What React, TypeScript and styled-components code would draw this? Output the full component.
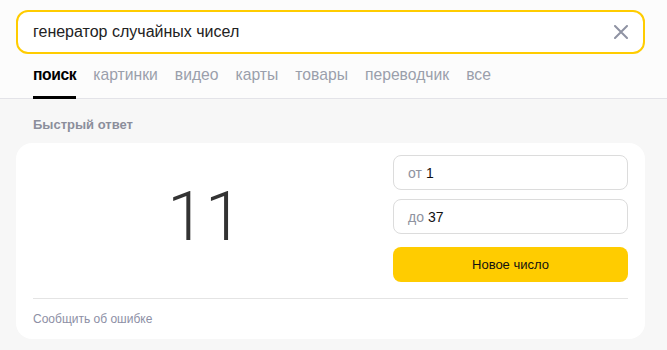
import React, { useState } from "react";
import styled, { createGlobalStyle } from "styled-components";

const GlobalStyle = createGlobalStyle`
  body {
    margin: 0;
    background: #f7f7f7;
    font-family: "Liberation Sans", Arial, sans-serif;
  }
`;

const Header = styled.header`
  background: #fcfcfc;
  border-bottom: 1px solid #e3e3e8;
  padding: 10px 0 0 16px;
`;

const SearchBox = styled.div`
  width: 629px;
  height: 44px;
  box-sizing: border-box;
  border: 2px solid #ffcc00;
  border-radius: 12px;
  background: #fff;
  display: flex;
  align-items: center;
  padding: 0 12px 0 15px;
`;

const Query = styled.input`
  flex: 1;
  border: none;
  outline: none;
  background: transparent;
  font: 16px "Liberation Sans", Arial, sans-serif;
  color: #222;
  padding: 0;
`;

const Clear = styled.button`
  border: none;
  background: none;
  padding: 0;
  width: 20px;
  height: 20px;
  display: flex;
  align-items: center;
  justify-content: center;
  cursor: pointer;
`;

const Tabs = styled.nav`
  display: flex;
  gap: 17px;
  padding-left: 17px;
  margin-top: 9px;
`;

const Tab = styled.a<{ $active?: boolean }>`
  font-size: 15.7px;
  line-height: 20px;
  padding: 2px 0 11px;
  color: ${p => (p.$active ? "#000" : "#9a9fab")};
  font-weight: ${p => (p.$active ? 700 : 400)};
  letter-spacing: ${p => (p.$active ? "-0.4px" : "0")};
  border-bottom: 3px solid ${p => (p.$active ? "#000" : "transparent")};
  margin-bottom: -1px;
  text-decoration: none;
  cursor: pointer;
`;

const Main = styled.main`
  padding: 18px 22px 0 16px;
`;

const Caption = styled.h3`
  margin: 0 0 10px 17px;
  font-size: 13px;
  line-height: 16px;
  font-weight: 700;
  color: #8b8e9b;
`;

const Card = styled.section`
  background: #fff;
  border-radius: 16px;
  padding: 12px 17px 0;
  height: 196px;
  box-sizing: border-box;
`;

const Row = styled.div`
  display: grid;
  grid-template-columns: 1fr 235px;
  gap: 16px;
`;

const Result = styled.div`
  display: flex;
  align-items: center;
  justify-content: center;
  font-family: Roboto, "Liberation Sans", sans-serif;
  font-size: 68px;
  font-weight: 300;
  color: #333;
  padding-bottom: 4px;
`;

const Controls = styled.div`
  display: flex;
  flex-direction: column;
  gap: 9px;
`;

const Field = styled.label`
  height: 35px;
  box-sizing: border-box;
  border: 1px solid #dcdcdc;
  border-radius: 8px;
  display: flex;
  align-items: center;
  padding-left: 14px;
  font-size: 14px;
  gap: 4px;
`;

const FieldLabel = styled.span`
  color: #8f93a0;
`;

const FieldValue = styled.span`
  color: #111;
`;

const Generate = styled.button`
  margin-top: 4px;
  height: 35px;
  border: none;
  border-radius: 8px;
  background: #ffcc00;
  font: 13px "Liberation Sans", Arial, sans-serif;
  color: #111;
  cursor: pointer;
`;

const Divider = styled.hr`
  border: none;
  border-top: 1px solid #e4e4e4;
  margin: 16px 0 0;
`;

const Report = styled.a`
  display: block;
  padding-top: 13px;
  font-size: 12px;
  color: #8d8fa5;
  text-decoration: none;
`;

const tabs = ["поиск", "картинки", "видео", "карты", "товары", "переводчик", "все"];

export default function App() {
  const [value, setValue] = useState(11);
  const [query, setQuery] = useState("генератор случайных чисел");
  const min = 1;
  const max = 37;

  return (
    <>
      <GlobalStyle />
      <Header>
        <SearchBox>
          <Query value={query} onChange={e => setQuery(e.target.value)} />
          <Clear onClick={() => setQuery("")} aria-label="Очистить">
            <svg width="14" height="14" viewBox="0 0 14 14">
              <path d="M1 1L13 13M13 1L1 13" stroke="#8f93a3" strokeWidth="2" strokeLinecap="round" />
            </svg>
          </Clear>
        </SearchBox>
        <Tabs>
          {tabs.map((t, i) => (
            <Tab key={t} $active={i === 0}>
              {t}
            </Tab>
          ))}
        </Tabs>
      </Header>
      <Main>
        <Caption>Быстрый ответ</Caption>
        <Card>
          <Row>
            <Result>{value}</Result>
            <Controls>
              <Field>
                <FieldLabel>от</FieldLabel>
                <FieldValue>{min}</FieldValue>
              </Field>
              <Field>
                <FieldLabel>до</FieldLabel>
                <FieldValue>{max}</FieldValue>
              </Field>
              <Generate onClick={() => setValue(min + Math.floor(Math.random() * (max - min + 1)))}>
                Новое число
              </Generate>
            </Controls>
          </Row>
          <Divider />
          <Report>Сообщить об ошибке</Report>
        </Card>
      </Main>
    </>
  );
}
